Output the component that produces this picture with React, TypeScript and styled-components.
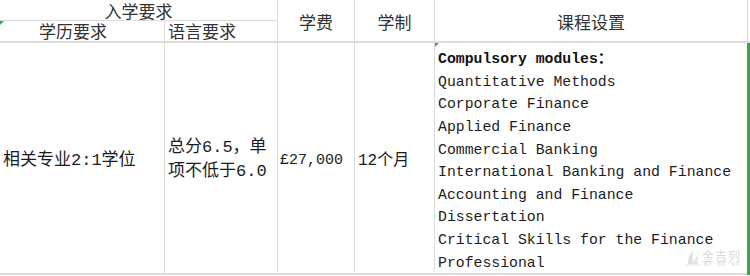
import React from "react";
import styled, { createGlobalStyle, css } from "styled-components";

const Global = createGlobalStyle`
  html, body { margin: 0; padding: 0; background: #ffffff; }
  body { width: 750px; height: 276px; overflow: hidden; }
`;

const LINE = "#dcdcdc";
const GREEN = "#3aa64a";

const Sheet = styled.div`
  position: relative;
  display: grid;
  grid-template-columns: 165px 113px 77px 80px 312px 3px;
  grid-template-rows: 21px 22px 232px;
  width: 750px;
  height: 276px;
  background: #ffffff;
  box-sizing: border-box;
`;

const Cell = styled.div<{
  $col: string;
  $row: string;
  $right?: boolean;
  $bottom?: number;
}>`
  position: relative;
  grid-column: ${(p) => p.$col};
  grid-row: ${(p) => p.$row};
  box-sizing: border-box;
  display: flex;
  min-width: 0;
  border-right: ${(p) => (p.$right === false ? "none" : `1px solid ${LINE}`)};
  border-bottom: ${(p) => `${p.$bottom ?? 1}px solid ${LINE}`};
`;

const Head = styled(Cell)<{ $align?: "center" | "start"; $v?: "center" | "end" }>`
  font-family: "Noto Sans CJK SC", "Noto Sans", sans-serif;
  font-size: 17px;
  color: #333333;
  line-height: 20px;
  white-space: nowrap;
  align-items: ${(p) => (p.$v === "end" ? "flex-end" : "center")};
  justify-content: ${(p) => (p.$align === "start" ? "flex-start" : "center")};
`;

const marker = css`
  &::before {
    content: "";
    position: absolute;
    left: 0;
    top: 0;
    width: 0;
    height: 0;
    border-top: 4px solid ${GREEN};
    border-right: 4px solid transparent;
  }
`;

const GroupHead = styled(Head)`
  align-items: flex-start;
  padding-top: 1px;
  line-height: 19px;
`;

const SubHead = styled(Head)<{ $marked?: boolean; $pl?: number; $pr?: number }>`
  padding-left: ${(p) => p.$pl ?? 0}px;
  padding-right: ${(p) => p.$pr ?? 0}px;
  ${(p) => p.$marked && marker}
`;

const TallHead = styled(Head)`
  padding-top: 3px;
`;

const EdgeHead = styled(Cell)`
  border-left: 1px solid ${LINE};
  border-right: none;
`;

const Body = styled(Cell)<{ $size: number; $pl: number; $lh?: number; $pt?: number }>`
  font-family: "Liberation Mono", "Noto Sans CJK SC", monospace;
  font-size: ${(p) => p.$size}px;
  line-height: ${(p) => p.$lh ?? 24}px;
  color: #1c1c1c;
  align-items: center;
  padding-left: ${(p) => p.$pl}px;
  padding-top: ${(p) => p.$pt ?? 6}px;
  white-space: nowrap;
`;

const Course = styled(Cell)`
  ${marker}
  flex-direction: column;
  font-family: "Liberation Mono", "Noto Sans CJK SC", monospace;
  font-size: 14.8px;
  line-height: 22.63px;
  color: #1c1c1c;
  padding: 5px 0 0 3px;
  white-space: nowrap;
  overflow: visible;
`;

const ModuleTitle = styled.div`
  font-weight: 700;
  color: #111111;
  height: 22.63px;
`;

const Module = styled.div`
  height: 22.63px;
`;

const Selection = styled(Cell)`
  background: ${GREEN};
  border: none;
  grid-row: 3;
  height: 232px;
`;

const Watermark = styled.div`
  position: absolute;
  right: 9px;
  bottom: 10px;
  display: flex;
  align-items: center;
  gap: 1px;
  opacity: 0.55;
  pointer-events: none;
`;

const MarkText = styled.div`
  display: flex;
  flex-direction: column;
  align-items: center;
  font-family: "Noto Sans CJK SC", sans-serif;
  color: #b8b8b8;
  font-size: 12px;
  line-height: 13px;
  letter-spacing: 1px;
`;

const MarkSub = styled.span`
  font-size: 4px;
  line-height: 4px;
  letter-spacing: 0;
`;

const modules = [
  "Quantitative Methods",
  "Corporate Finance",
  "Applied Finance",
  "Commercial Banking",
  "International Banking and Finance",
  "Accounting and Finance",
  "Dissertation",
  "Critical Skills for the Finance",
  "Professional",
];

export default function App() {
  return (
    <>
      <Global />
      <Sheet>
        <GroupHead $col="1 / 3" $row="1">入学要求</GroupHead>
        <TallHead $col="3" $row="1 / 3" $bottom={2}>学费</TallHead>
        <TallHead $col="4" $row="1 / 3" $bottom={2}>学制</TallHead>
        <TallHead $col="5" $row="1 / 3" $bottom={2} $right={false}>课程设置</TallHead>
        <EdgeHead $col="6" $row="1 / 3" $bottom={2} />

        <SubHead $col="1" $row="2" $bottom={2} $v="end" $pr={18} $marked>学历要求</SubHead>
        <SubHead $col="2" $row="2" $bottom={2} $v="end" $align="start" $pl={3}>语言要求</SubHead>

        <Body $col="1" $row="3" $bottom={2} $size={17} $pl={3}>相关专业2:1学位</Body>
        <Body $col="2" $row="3" $bottom={2} $size={17} $pl={3} $pt={3}>
          <div>
            总分6.5，单
            <br />
            项不低于6.0
          </div>
        </Body>
        <Body $col="3" $row="3" $bottom={2} $size={15} $pl={2} $pt={5}>£27,000</Body>
        <Body $col="4" $row="3" $bottom={2} $size={16} $pl={3} $pt={5}>12个月</Body>
        <Course $col="5" $row="3" $bottom={2} $right={false}>
          <ModuleTitle>Compulsory modules：</ModuleTitle>
          {modules.map((m) => (
            <Module key={m}>{m}</Module>
          ))}
        </Course>
        <Selection $col="6" $row="3" />

        <Watermark>
          <svg width="16" height="18" viewBox="0 0 16 18">
            <path d="M3 16 C3 10 5 5 8 2 C7 6 7 11 9 16 Z" fill="#c4c4c4" />
            <path d="M8 16 C9 12 11 9 14 7 C12 10 12 13 13 16 Z" fill="#cfcfcf" />
            <path d="M1 17 H15" stroke="#c8c8c8" strokeWidth="1" />
          </svg>
          <MarkText>
            金吉列
            <MarkSub>留学 · 移民 · 游学</MarkSub>
          </MarkText>
        </Watermark>
      </Sheet>
    </>
  );
}
